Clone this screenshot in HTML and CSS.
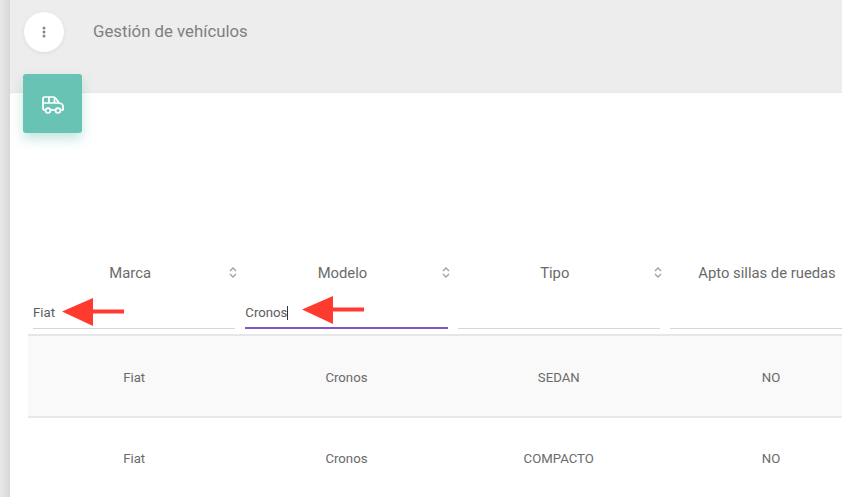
FILE: index.html
```html
<!DOCTYPE html>
<html lang="en">
<head>
    <meta charset="UTF-8">
    <title>Gestión de vehículos</title>
    <link rel="stylesheet" href="styles.css">
</head>
<body>

    <div class="side-edge"></div>

    <div class="main">
        <header class="topbar">
            <button class="menu-btn" type="button">
                <svg width="4" height="12" viewBox="0 0 4 12"><circle cx="2" cy="2" r="1.5"/><circle cx="2" cy="6" r="1.5"/><circle cx="2" cy="10" r="1.5"/></svg>
            </button>
            <span class="page-title">Gestión de vehículos</span>
        </header>

        <section class="card">
            <div class="card-icon">
                <svg width="22" height="18" viewBox="0 0 22 18" fill="none" stroke="#fff" stroke-width="1.7" stroke-linejoin="round">
                    <path d="M3.5 14H2.500C1.600 14 1 13.400 1 12.500V2.500C1 1.600 1.600 1 2.500 1h9c1 0 1.600.4 2.200 1.200L17 7l2.400.8c1 .4 1.600 1.200 1.600 2.200V14h-2.500"/>
                    <path d="M8.500 14h5"/>
                    <path d="M1 7h16M7 1v6M12.500 1v6"/>
                    <circle cx="6" cy="14.500" r="2.400"/>
                    <circle cx="16" cy="14.500" r="2.400"/>
                </svg>
            </div>

            <div class="vehicle-table">
                <div class="head-row">
                    <div class="head-cell">
                        <div class="head-label">
                            <span>Marca</span>
                            <svg class="sort" width="8" height="13" viewBox="0 0 8 13"><path d="M1 5l3-3 3 3M1 8l3 3 3-3"/></svg>
                        </div>
                        <div class="filter">Fiat</div>
                    </div>
                    <div class="head-cell">
                        <div class="head-label">
                            <span>Modelo</span>
                            <svg class="sort" width="8" height="13" viewBox="0 0 8 13"><path d="M1 5l3-3 3 3M1 8l3 3 3-3"/></svg>
                        </div>
                        <div class="filter filter-active">Cronos<i class="caret"></i></div>
                    </div>
                    <div class="head-cell">
                        <div class="head-label">
                            <span>Tipo</span>
                            <svg class="sort" width="8" height="13" viewBox="0 0 8 13"><path d="M1 5l3-3 3 3M1 8l3 3 3-3"/></svg>
                        </div>
                        <div class="filter"></div>
                    </div>
                    <div class="head-cell">
                        <div class="head-label">
                            <span>Apto sillas de ruedas</span>
                        </div>
                        <div class="filter"></div>
                    </div>
                </div>

                <div class="row row-odd">
                    <div class="cell">Fiat</div>
                    <div class="cell">Cronos</div>
                    <div class="cell">SEDAN</div>
                    <div class="cell">NO</div>
                </div>
                <div class="row">
                    <div class="cell">Fiat</div>
                    <div class="cell">Cronos</div>
                    <div class="cell">COMPACTO</div>
                    <div class="cell">NO</div>
                </div>
            </div>
        </section>
    </div>

    <!-- red arrows drawn over the filters -->
    <svg class="arrow arrow-marca" width="62" height="28" viewBox="0 0 62 28"><path d="M0 13.500L31 0v11.500h31v4H31V28z"/></svg>
    <svg class="arrow arrow-modelo" width="62" height="28" viewBox="0 0 62 28"><path d="M0 13.500L31 0v11.500h31v4H31V28z"/></svg>

</body>
</html>
```

FILE: styles.css
```css
html, body {
    height: 100%;
}
body {
    margin: 0;
    padding: 0;
    display: flex;
    overflow: hidden;
    position: relative;
    font-family: Roboto, "Liberation Sans", sans-serif;
    background-color: #ededed;
    color: #666;
}
.side-edge {
    width: 10px;
    flex-shrink: 0;
    background: linear-gradient(to right, #e8e8e8, #d9d9d9 90%);
}
.main {
    flex: 1;
    min-width: 0;
    display: flex;
    flex-direction: column;
}
.topbar {
    height: 93px;
    flex-shrink: 0;
    box-sizing: border-box;
    padding: 12px 0 0 14px;
    display: flex;
    align-items: flex-start;
    gap: 29px;
    border-bottom: 1px solid #e8e8e8;
}
.menu-btn {
    width: 40px;
    height: 40px;
    border: none;
    border-radius: 50%;
    background-color: #fff;
    box-shadow: 0 1px 4px rgba(0, 0, 0, 0.08);
    display: flex;
    align-items: center;
    justify-content: center;
    padding: 0;
}
.menu-btn svg {
    fill: #888;
}
.page-title {
    font-size: 16.8px;
    line-height: 39px;
    color: #808080;
}
.card {
    flex: 1;
    min-height: 0;
    background-color: #fff;
    border-top-left-radius: 3px;
    padding-left: 18px;
}
.card-icon {
    width: 59px;
    height: 59px;
    box-sizing: border-box;
    padding-top: 2px;
    margin: -19px 0 0 -5px;
    border-radius: 3px;
    background-color: #69c3b5;
    box-shadow: 0 6px 12px rgba(90, 180, 165, 0.35);
    display: flex;
    align-items: center;
    justify-content: center;
    position: relative;
}
.vehicle-table {
    width: 850px;
    margin-top: 127px;
}
.head-row, .row {
    display: grid;
    grid-template-columns: repeat(4, 212.3px);
}
.head-row {
    height: 76px;
    border-bottom: 2px solid #e6e6e6;
    box-sizing: border-box;
}
.head-cell {
    padding: 0 5px;
}
.head-label {
    height: 26px;
    box-sizing: border-box;
    padding-right: 8px;
    display: flex;
    align-items: center;
    justify-content: center;
    position: relative;
    font-size: 14.8px;
    color: #6a6a6a;
}
.sort {
    position: absolute;
    right: -2px;
    top: 6px;
    fill: none;
    stroke: #a0a0a0;
    stroke-width: 1.300;
}
.filter {
    box-sizing: border-box;
    height: 28px;
    margin-top: 15px;
    font-size: 13.200px;
    line-height: 24px;
    color: #5c5c5c;
    border-bottom: 1px solid #d6d6d6;
}
.filter-active {
    border-bottom: 2px solid #7e57c2;
}
.caret {
    display: inline-block;
    width: 1px;
    height: 14px;
    background-color: #333;
    vertical-align: -3px;
}
.row {
    height: 82px;
    box-sizing: border-box;
    border-bottom: 2px solid #e8e8e8;
}
.row-odd {
    background-color: #f9f9f9;
}
.cell {
    display: flex;
    align-items: center;
    justify-content: center;
    font-size: 13.200px;
    color: #6a6a6a;
}
.row-odd .cell {
    padding-top: 2px;
}
.arrow {
    position: absolute;
    fill: #ff3b30;
}
.arrow-marca {
    left: 62px;
    top: 298px;
}
.arrow-modelo {
    left: 302px;
    top: 296px;
}
```
